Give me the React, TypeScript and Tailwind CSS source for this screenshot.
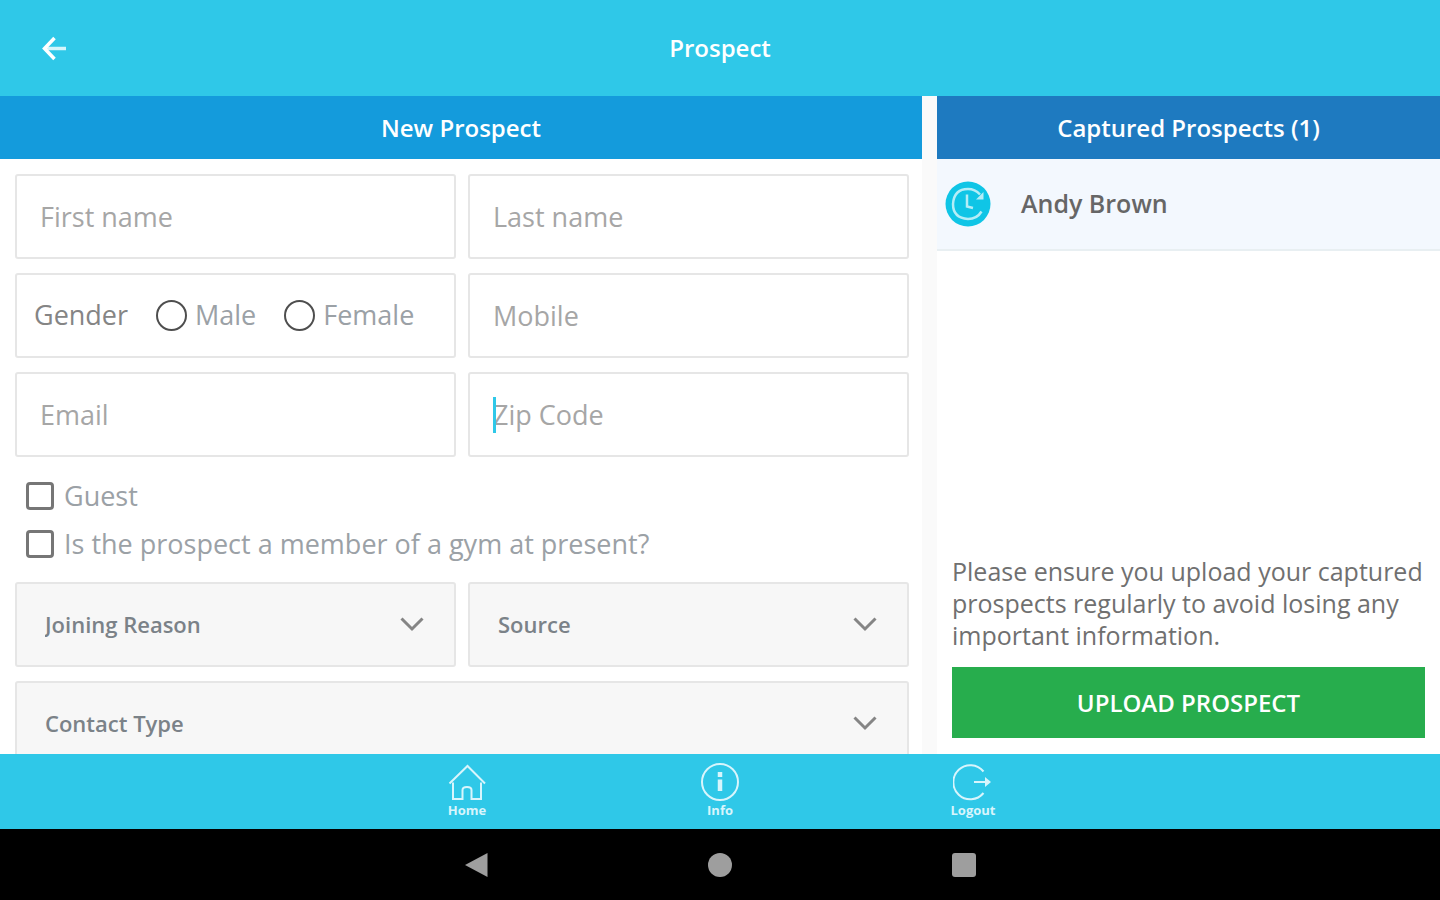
import type { ReactNode } from "react";

const fieldBox = "h-[85px] w-full rounded-[3px] border-2 border-[#e6e6e6]";

function TextField({ label, type = "text", active = false }: { label: string; type?: string; active?: boolean }) {
  return (
    <div className="relative">
      <input
        type={type}
        aria-label={label}
        placeholder={label}
        className={`${fieldBox} block bg-white px-[23px] text-[27px] text-[#666] caret-[#2fc8e8] outline-none placeholder:text-[#a6a6a6] placeholder:opacity-100`}
      />
      {active && <span className="absolute top-[25px] left-[25px] h-9 w-[3px] bg-[#2fc8e8]" />}
    </div>
  );
}

function SelectField({ label }: { label: string }) {
  return (
    <div className="relative">
      <select
        aria-label={label}
        className={`${fieldBox} block appearance-none bg-[#f7f7f7] pl-7 text-[22px] font-semibold text-[#7b8288] outline-none`}
      >
        <option>{label}</option>
      </select>
      <svg
        className="pointer-events-none absolute top-[34px] right-8 h-4 w-6"
        viewBox="0 0 24 16"
        fill="none"
        stroke="#858585"
        strokeWidth="3"
      >
        <path d="M1.5 2.5 12 13 22.5 2.5" />
      </svg>
    </div>
  );
}

function CheckRow({ label }: { label: string }) {
  return (
    <label className="flex h-12 items-center gap-2.5 text-[27px] text-[#9ba1a6]">
      <input type="checkbox" className="size-7 shrink-0 appearance-none rounded-[4px] border-3 border-[#767676]" />
      {label}
    </label>
  );
}

function GenderOption({ label }: { label: string }) {
  return (
    <label className="flex items-center gap-2 text-[27px] text-[#9ba1a6]">
      <input
        type="radio"
        name="gender"
        className="size-[31px] shrink-0 appearance-none rounded-full border-2 border-[#4e4e4e]"
      />
      {label}
    </label>
  );
}

function TabLink({ label, children }: { label: string; children: ReactNode }) {
  return (
    <a href="#" className="flex w-20 flex-col items-center text-[13px] leading-4 font-bold text-[#d8f5fc]">
      <svg className="h-10 w-10" viewBox="0 0 40 40" fill="none" stroke="currentColor" strokeWidth="2">
        {children}
      </svg>
      {label}
    </a>
  );
}

export default function App() {
  return (
    <div className="flex h-screen flex-col overflow-hidden bg-white font-['Open_Sans','Noto_Sans',sans-serif]">
      <header className="grid h-24 shrink-0 grid-cols-[1fr_auto_1fr] items-center bg-[#2fc8e8] px-10 text-white">
        <button type="button" aria-label="Back" className="size-7">
          <svg className="size-7" viewBox="0 0 28 28" fill="none" stroke="currentColor" strokeWidth="3.5">
            <path d="M6 14.500h20" stroke="#d5f5fb" />
            <path d="M14.500 4 4.500 14.500l10 10.500" />
          </svg>
        </button>
        <h1 className="text-2xl font-semibold">Prospect</h1>
      </header>

      <main className="grid min-h-0 flex-1 grid-cols-[922fr_503fr] gap-[15px] bg-[#fafafa]">
        <section className="flex min-h-0 flex-col overflow-hidden bg-white">
          <h2 className="flex h-[63px] shrink-0 items-center justify-center bg-[#149bdc] text-2xl font-semibold text-white">
            New Prospect
          </h2>
          <form className="flex flex-col pt-[15px] pr-[13px] pl-[15px]">
            <div className="grid grid-cols-2 gap-x-3 gap-y-3.5">
              <TextField label="First name" />
              <TextField label="Last name" />
              <div role="radiogroup" aria-label="Gender" className={`${fieldBox} flex items-center px-[17px]`}>
                <span className="w-[122px] text-[27px] text-[#858585]">Gender</span>
                <div className="flex gap-7">
                  <GenderOption label="Male" />
                  <GenderOption label="Female" />
                </div>
              </div>
              <TextField label="Mobile" type="tel" />
              <TextField label="Email" type="email" />
              <TextField label="Zip Code" active />
            </div>
            <div className="flex flex-col px-[11px] pt-[15px] pb-3.5">
              <CheckRow label="Guest" />
              <CheckRow label="Is the prospect a member of a gym at present?" />
            </div>
            <div className="grid grid-cols-2 gap-x-3 gap-y-3.5">
              <SelectField label="Joining Reason" />
              <SelectField label="Source" />
              <div className="col-span-2">
                <SelectField label="Contact Type" />
              </div>
            </div>
          </form>
        </section>

        <aside className="flex min-h-0 flex-col bg-white">
          <h2 className="flex h-[63px] shrink-0 items-center justify-center bg-[#1e7ac0] text-2xl font-semibold text-white">
            Captured Prospects (1)
          </h2>
          <ul>
            <li className="flex h-[92px] items-center gap-[30px] border-b-2 border-[#e8eff2] bg-[#f3f8fe] px-2 text-[25px] font-semibold text-[#666]">
              <svg className="size-[46px]" viewBox="0 0 46 46" fill="none">
                <circle cx="23" cy="23" r="22.500" fill="#0fc5e6" />
                <g stroke="#b4edf7" strokeWidth="2.500">
                  <path d="M36.500 30.500Q32 38 23 38 8 37 8 23 9 8 23 8 30 8 35 13.500" />
                  <path d="M22 13.500v12l6 1.500" />
                </g>
                <path d="M38.500 11v7.500h-7.500z" fill="#b4edf7" />
              </svg>
              Andy Brown
            </li>
          </ul>
          <div className="mt-auto px-[15px] pb-4">
            <p className="text-[25px] leading-8 text-[#707070]">
              Please ensure you upload your captured prospects regularly to avoid losing any important information.
            </p>
            <button type="button" className="mt-4 h-[71px] w-full bg-[#27ad4d] text-2xl font-semibold text-white">
              UPLOAD PROSPECT
            </button>
          </div>
        </aside>
      </main>

      <nav className="flex h-[75px] shrink-0 justify-center gap-[173px] bg-[#2fc8e8] pt-2">
        <TabLink label="Home">
          <path d="M2.500 21.500 20.500 4l17.500 17.500" />
          <path d="M6 20.500v16.500h9.500V28q0-3 4.500-3t4.500 3v9h9.500V20.500" />
        </TabLink>
        <TabLink label="Info">
          <circle cx="20" cy="20" r="18" />
          <path d="M20 17.500V29" strokeWidth="4.500" />
          <path d="M20 10v5" strokeWidth="4.500" />
        </TabLink>
        <TabLink label="Logout">
          <path d="M30.500 9.500A17 17 0 1 0 30.500 31" />
          <path d="M21 20h12" />
          <path d="M32 15 38 20l-6 5z" fill="currentColor" stroke="none" />
        </TabLink>
      </nav>

      <footer className="flex h-[71px] shrink-0 items-center justify-center gap-[220px] bg-black">
        <button type="button" aria-label="System back" className="size-6">
          <svg className="h-6 w-6" viewBox="0 0 24 24" fill="#9e9e9e">
            <path d="M23.500 0v24L1 12z" />
          </svg>
        </button>
        <button type="button" aria-label="System home" className="size-6 rounded-full bg-[#9e9e9e]" />
        <button type="button" aria-label="Recent apps" className="size-6 rounded-[3px] bg-[#9e9e9e]" />
      </footer>
    </div>
  );
}
